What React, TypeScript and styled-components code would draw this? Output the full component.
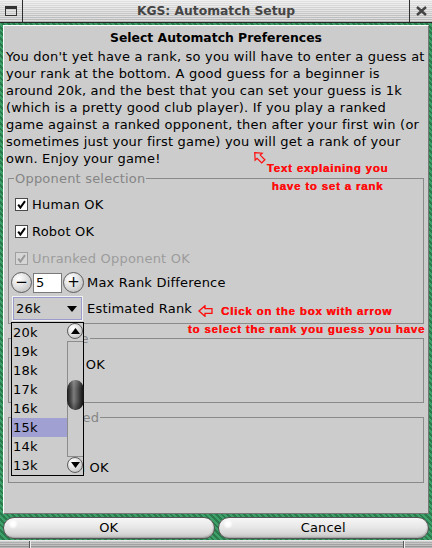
import React from "react";
import styled, { createGlobalStyle } from "styled-components";

const Global = createGlobalStyle`
  html, body { margin: 0; padding: 0; background: #cccccc; }
  body { font-family: "DejaVu Sans", "Liberation Sans", sans-serif; }
  #root { width: 432px; height: 548px; }
`;

const Win = styled.div`
  width: 432px;
  height: 548px;
  display: flex;
  flex-direction: column;
  overflow: hidden;
  font-family: "DejaVu Sans", "Liberation Sans", sans-serif;
  font-size: 13px;
  letter-spacing: 0.2px;
  color: #000;
`;

const barStripes = `repeating-linear-gradient(to bottom, rgba(255,255,255,0.5) 0 1px, rgba(255,255,255,0) 1px 2px), linear-gradient(to bottom, #e4e4e4, #b4b4b4)`;

const TitleBar = styled.div`
  height: 22px;
  border-bottom: 1px solid #262626;
  display: flex;
  background: ${barStripes};
`;

const TitleBox = styled.div<{ $side: "left" | "right" }>`
  width: 22px;
  display: flex;
  align-items: center;
  justify-content: center;
  ${(p) => (p.$side === "left" ? "border-right: 1px solid #2e2e2e;" : "border-left: 1px solid #2e2e2e;")}
`;

const Title = styled.div`
  flex: 1;
  display: flex;
  align-items: center;
  justify-content: center;
  font-weight: bold;
  font-size: 12.3px;
  letter-spacing: 0;
  color: #454545;
`;

const Frame = styled.div`
  flex: 1;
  display: flex;
  flex-direction: column;
  gap: 3px;
  padding: 2px 3px 1px;
  background: repeating-linear-gradient(45deg, #3da068 0 2px, #2a7a4d 2px 4px);
`;

const Panel = styled.div`
  position: relative;
  flex: 1;
  background: #cccccc;
  border: 1px solid;
  border-color: #ffffff #777777 #777777 #ffffff;
  padding: 3px 2px 0;
`;

const Heading = styled.div`
  font-weight: bold;
  font-size: 12.4px;
  letter-spacing: 0;
  line-height: 17px;
  text-align: center;
  margin-bottom: 2px;
`;

const Para = styled.p`
  margin: 0;
  line-height: 17px;
  white-space: nowrap;
`;

const Group = styled.fieldset<{ $mt: number; $pt: number; $pb: number }>`
  margin: ${(p) => p.$mt}px 2px 0;
  padding: ${(p) => p.$pt}px 6px ${(p) => p.$pb}px 3px;
  border: 1px solid #8a8a8a;
  min-width: 0;
`;

const Legend = styled.legend`
  padding: 0 1px;
  margin-left: 2px;
  line-height: 17px;
  color: #858585;
`;

const Row = styled.div<{ $h: number; $indent?: number; $mt?: number }>`
  height: ${(p) => p.$h}px;
  display: flex;
  align-items: center;
  margin-left: ${(p) => p.$indent ?? 0}px;
  margin-top: ${(p) => p.$mt ?? 0}px;
`;

const CheckRow = styled(Row)`
  gap: 4px;
  padding-left: 3px;
`;

const Box = styled.span<{ $disabled?: boolean }>`
  width: 13px;
  height: 13px;
  box-sizing: border-box;
  border: 1px solid ${(p) => (p.$disabled ? "#a0a0a0" : "#4a4a4a")};
  background: ${(p) => (p.$disabled ? "#d6d6d6" : "#ffffff")};
  display: flex;
  align-items: center;
  justify-content: center;
`;

const Label = styled.span<{ $disabled?: boolean; $ml?: number }>`
  color: ${(p) => (p.$disabled ? "#9c9c9c" : "#000")};
  margin-left: ${(p) => p.$ml ?? 0}px;
  white-space: nowrap;
`;

const RoundBtn = styled.span`
  width: 21px;
  height: 21px;
  box-sizing: border-box;
  border-radius: 50%;
  border: 1px solid #5c5c5c;
  background: radial-gradient(circle at 35% 30%, #ffffff 0, #f0f0f0 25%, #c8c8c8 75%, #a8a8a8 100%);
  display: flex;
  align-items: center;
  justify-content: center;
  font-size: 15px;
  line-height: 1;
  letter-spacing: 0;
`;

const Field = styled.span`
  width: 29px;
  height: 20px;
  box-sizing: border-box;
  margin: 0 1px;
  border: 1px solid #7a7a7a;
  background: #fff;
  padding-left: 2px;
  display: flex;
  align-items: center;
`;

const ComboWrap = styled.div`
  position: relative;
  margin-left: 1px;
`;

const Combo = styled.div`
  width: 69px;
  height: 23px;
  box-sizing: border-box;
  border: 1px solid #9a9acc;
  box-shadow: 0 0 0 1px #f2f2f2;
  display: flex;
  align-items: center;
  justify-content: space-between;
  padding: 0 4px 0 2px;
  background: #cccccc;
`;

const ListPopup = styled.div`
  position: absolute;
  left: -2px;
  top: calc(100% + 2px);
  width: 73px;
  height: 154px;
  box-sizing: border-box;
  border: 1px solid #000;
  background: #cccccc;
  display: flex;
  z-index: 5;
`;

const Items = styled.div`
  width: 55px;
  display: flex;
  flex-direction: column;
`;

const Item = styled.div<{ $sel?: boolean }>`
  height: 19px;
  line-height: 19px;
  padding-left: 1px;
  background: ${(p) => (p.$sel ? "#a0a0d2" : "transparent")};
`;

const ScrollBar = styled.div`
  width: 16px;
  display: flex;
  flex-direction: column;
`;

const ScrollBtn = styled.span`
  width: 16px;
  height: 16px;
  box-sizing: border-box;
  border-radius: 50%;
  border: 1px solid #5c5c5c;
  background: radial-gradient(circle at 35% 30%, #ffffff 0, #f0f0f0 25%, #c4c4c4 80%, #a4a4a4 100%);
  display: flex;
  align-items: center;
  justify-content: center;
`;

const Track = styled.div`
  height: 116px;
  margin: 2px 0 0;
  box-sizing: border-box;
  border: 1px solid #8c8c8c;
  border-right: none;
`;

const Thumb = styled.div<{ $offset: number }>`
  margin-top: ${(p) => p.$offset}px;
  margin-left: -1px;
  width: 17px;
  height: 30px;
  border-radius: 8px / 10px;
  background:
    linear-gradient(to bottom, rgba(255,255,255,0.12), rgba(0,0,0,0) 30%, rgba(0,0,0,0) 70%, rgba(0,0,0,0.35)),
    linear-gradient(to right, #1a1a1a 0%, #4a4a4a 22%, #7c7c7c 40%, #555 62%, #262626 85%, #111 100%);
`;

const Note = styled.div<{ $x: number; $y: number; $w: number }>`
  position: absolute;
  left: ${(p) => p.$x}px;
  top: ${(p) => p.$y}px;
  width: ${(p) => p.$w}px;
  text-align: center;
  font-family: "Liberation Sans", Arial, sans-serif;
  font-weight: bold;
  font-size: 11.5px;
  letter-spacing: 0.8px;
  line-height: 18.3px;
  color: #ff0d0d;
  text-shadow: 0.35px 0 0 #ff0d0d;
  white-space: nowrap;
`;

const Pointer = styled.svg<{ $x: number; $y: number }>`
  position: absolute;
  left: ${(p) => p.$x}px;
  top: ${(p) => p.$y}px;
`;

const ButtonRow = styled.div`
  height: 22px;
  display: grid;
  grid-template-columns: 1fr 1fr;
  gap: 3px;
`;

const PillButton = styled.button`
  all: unset;
  box-sizing: border-box;
  height: 22px;
  border-radius: 11px;
  border: 1px solid #555;
  background:
    radial-gradient(circle at 9px 6px, #ffffff 0, #ffffff 2px, rgba(255,255,255,0) 5px),
    linear-gradient(to bottom, #f6f6f6 0%, #e8e8e8 45%, #d6d6d6 80%, #bcbcbc 100%);
  box-shadow: inset -1px -1px 1px rgba(0,0,0,0.15);
  text-align: center;
  line-height: 20px;
  font-family: "DejaVu Sans", sans-serif;
  font-size: 13px;
  letter-spacing: 0.2px;
  color: #000;
`;

const BottomBar = styled.div`
  height: 8px;
  display: flex;
  border-top: 1px solid #e8e8e8;
  box-sizing: border-box;
  background: repeating-linear-gradient(to bottom, rgba(255,255,255,0.35) 0 1px, rgba(255,255,255,0) 1px 2px), linear-gradient(to bottom, #b8b8b8, #8c8c8c);
`;

const BottomSeg = styled.div<{ $w?: number }>`
  ${(p) => (p.$w ? `width: ${p.$w}px;` : "flex: 1;")}
  & + & { border-left: 1px solid #5a5a5a; box-shadow: inset 1px 0 0 #eeeeee; }
`;

const Check: React.FC<{ disabled?: boolean }> = ({ disabled }) => (
  <Box $disabled={disabled}>
    <svg width="9" height="9" viewBox="0 0 9 9">
      <path
        d="M1.2 4.6 L3.4 7.6 L8 1.2"
        fill="none"
        stroke={disabled ? "#9a9a9a" : "#000"}
        strokeWidth="2"
        strokeLinejoin="miter"
      />
    </svg>
  </Box>
);

const arrowPts = "1,6 7,0.7 7,3.6 14,3.6 14,8.4 7,8.4 7,11.3";

const ranks = ["20k", "19k", "18k", "17k", "16k", "15k", "14k", "13k"];

export default function App() {
  return (
    <>
      <Global />
      <Win>
        <TitleBar>
          <TitleBox $side="left">
            <svg width="12" height="10" viewBox="0 0 12 10">
              <rect x="0.5" y="0.5" width="11" height="9" fill="none" stroke="#333" />
              <rect x="0.5" y="0.5" width="11" height="2.5" fill="#333" />
            </svg>
          </TitleBox>
          <Title>KGS: Automatch Setup</Title>
          <TitleBox $side="right">
            <svg width="11" height="10" viewBox="0 0 11 10">
              <path d="M1 1 L10 9 M10 1 L1 9" stroke="#444" strokeWidth="2.4" />
            </svg>
          </TitleBox>
        </TitleBar>
        <Frame>
          <Panel>
            <Heading>Select Automatch Preferences</Heading>
            <Para>
              You don't yet have a rank, so you will have to enter a guess at
              <br />
              your rank at the bottom. A good guess for a beginner is
              <br />
              around 20k, and the best that you can set your guess is 1k
              <br />
              (which is a pretty good club player). If you play a ranked
              <br />
              game against a ranked opponent, then after your first win (or
              <br />
              sometimes just your first game) you will get a rank of your
              <br />
              own. Enjoy your game!
            </Para>
            <Group $mt={3} $pt={4} $pb={3}>
              <Legend>Opponent selection</Legend>
              <CheckRow $h={27}>
                <Check />
                <Label>Human OK</Label>
              </CheckRow>
              <CheckRow $h={27}>
                <Check />
                <Label>Robot OK</Label>
              </CheckRow>
              <CheckRow $h={27}>
                <Check disabled />
                <Label $disabled>Unranked Opponent OK</Label>
              </CheckRow>
              <Row $h={21} $indent={-1}>
                <RoundBtn>−</RoundBtn>
                <Field>5</Field>
                <RoundBtn>+</RoundBtn>
                <Label $ml={3}>Max Rank Difference</Label>
              </Row>
              <Row $h={23} $mt={4}>
                <ComboWrap>
                  <Combo>
                    <span>26k</span>
                    <svg width="10" height="6" viewBox="0 0 10 6">
                      <polygon points="0,0 10,0 5,6" fill="#000" />
                    </svg>
                  </Combo>
                  <ListPopup>
                    <Items>
                      {ranks.map((r) => (
                        <Item key={r} $sel={r === "15k"}>
                          {r}
                        </Item>
                      ))}
                    </Items>
                    <ScrollBar>
                      <ScrollBtn>
                        <svg width="9" height="6" viewBox="0 0 9 6">
                          <polygon points="0,6 9,6 4.5,0" fill="#000" />
                        </svg>
                      </ScrollBtn>
                      <Track>
                        <Thumb $offset={38} />
                      </Track>
                      <ScrollBtn>
                        <svg width="9" height="6" viewBox="0 0 9 6">
                          <polygon points="0,0 9,0 4.5,6" fill="#000" />
                        </svg>
                      </ScrollBtn>
                    </ScrollBar>
                  </ListPopup>
                </ComboWrap>
                <Label $ml={5}>Estimated Rank</Label>
              </Row>
            </Group>
            <Group $mt={6} $pt={4} $pb={24}>
              <Legend>Game type</Legend>
              <CheckRow $h={27}>
                <Check />
                <Label>Ranked OK</Label>
              </CheckRow>
            </Group>
            <Group $mt={6} $pt={1} $pb={1}>
              <Legend>Game speed</Legend>
              <CheckRow $h={27}>
                <Check />
                <Label>Fast OK</Label>
              </CheckRow>
              <CheckRow $h={27}>
                <Check />
                <Label>Medium OK</Label>
              </CheckRow>
            </Group>

            <Pointer $x={248} $y={124} width="14" height="14" viewBox="0 0 15 12">
              <polygon
                points={arrowPts}
                fill="none"
                stroke="#ff0d0d"
                strokeWidth="1.3"
                transform="rotate(45 7.5 6)"
              />
            </Pointer>
            <Note $x={243.5} $y={133} $w={160}>
              Text explaining you
              <br />
              have to set a rank
            </Note>
            <Pointer $x={194} $y={279} width="15" height="12" viewBox="0 0 15 12">
              <polygon points={arrowPts} fill="none" stroke="#ff0d0d" strokeWidth="1.3" />
            </Pointer>
            <Note $x={177.5} $y={275.6} $w={250}>
              Click on the box with arrow
              <br />
              to select the rank you guess you have
            </Note>
          </Panel>
          <ButtonRow>
            <PillButton>OK</PillButton>
            <PillButton>Cancel</PillButton>
          </ButtonRow>
        </Frame>
        <BottomBar>
          <BottomSeg $w={29} />
          <BottomSeg />
          <BottomSeg $w={28} />
        </BottomBar>
      </Win>
    </>
  );
}
